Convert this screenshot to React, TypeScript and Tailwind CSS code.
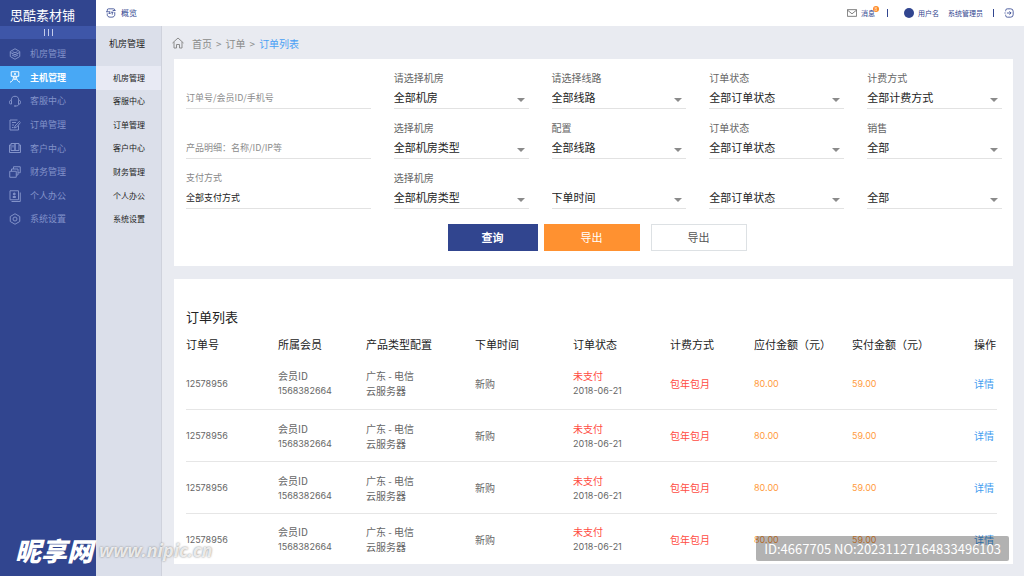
import { useState } from "react";
import type { ReactNode } from "react";

const menu = [
  { name: "机房管理", icon: "cube" },
  { name: "主机管理", icon: "host" },
  { name: "客服中心", icon: "headset" },
  { name: "订单管理", icon: "order" },
  { name: "客户中心", icon: "book" },
  { name: "财务管理", icon: "finance" },
  { name: "个人办公", icon: "person" },
  { name: "系统设置", icon: "setting" },
];

const subMenu = ["机房管理", "客服中心", "订单管理", "客户中心", "财务管理", "个人办公", "系统设置"];

const icons: Record<string, ReactNode> = {
  cube: (
    <>
      <path d="M12 1.5 21.5 7v10L12 22.5 2.5 17V7z" />
      <path d="m3 9 9 4.500L21 9M6 14l6 3 6-3M7 7.500l5 2 5-2" />
    </>
  ),
  host: (
    <>
      <path d="M4.500 1.500h15v9h-15z" />
      <path d="M10 6h4" strokeWidth="3" />
      <path d="M12 10.500v6M9 11c0 6-2 10-7 11.500M15 11c0 6 2 10 7 11.500M9 16.500h6" />
    </>
  ),
  headset: (
    <>
      <path d="M4.500 11a7.500 8.500 0 0 1 15 0M20 18c-1 3-3 4-7 4" />
      <path d="M5 11H3.500A2.500 2.500 0 0 0 1 13.500v2A2.500 2.500 0 0 0 3.500 18H5zM19 11h1.500a2.500 2.500 0 0 1 2.500 2.500v2a2.500 2.500 0 0 1-2.500 2.500H19z" />
      <circle cx="12" cy="22" r="1" />
    </>
  ),
  order: (
    <>
      <path d="M19 13v9H2V2h15" />
      <path d="M6 7h8M6 12h4M6 17h3M21.500 4 12 14l-1 4 4-1.500L23 7" />
    </>
  ),
  book: (
    <>
      <path d="M4 3h8v14H4zM12 3h8v14h-8z" />
      <path d="M4 6H1v15h22V6h-3M8 6v5" />
    </>
  ),
  finance: (
    <>
      <path d="M1.500 10.500h13v12h-13z" />
      <path d="M5 10.500V6h13v12h-3.500M9 6V1.500h13.500v12H18" />
    </>
  ),
  person: (
    <>
      <path d="M2 1.500h17v18H2z" />
      <path d="M22.500 5v18H5" />
      <circle cx="10.500" cy="8" r="2" fill="currentColor" />
      <path d="M8 15h5v-2H8z" fill="currentColor" />
    </>
  ),
  setting: (
    <>
      <path d="M12 1.500 21.500 7v10L12 22.500 2.500 17V7z" />
      <circle cx="12" cy="12" r="4" />
    </>
  ),
  overview: (
    <>
      <path d="M3 8V5a3 3 0 0 1 3-3h12a3 3 0 0 1 3 3M21 10v6c0 4-3 6-7 6h-4c-4 0-7-2-7-6v-3" />
      <path d="M0 9h7M16 6h7M9 7v6M6 13h5M15 10v6M12 10h6" />
    </>
  ),
  mail: <path d="M1 4h22v16H1zM1 5l11 9L23 5" />,
  home: <path d="M1 12 12 2l11 10M4 10v12h5v-7h6v7h5V10" />,
  logout: (
    <>
      <path d="M4 8V6a4 4 0 0 1 4-4h8a6 6 0 0 1 6 6v8a6 6 0 0 1-6 6H8a4 4 0 0 1-4-4v-2" />
      <path d="M1 12h3M7 12h10M13 8l4 4-4 4" />
    </>
  ),
};

function Icon({ name, className }: { name: string; className: string }) {
  return (
    <svg viewBox="0 0 24 24" fill="none" stroke="currentColor" strokeWidth="2" className={className} aria-hidden="true">
      {icons[name]}
    </svg>
  );
}

type Field = { id: string; label?: string; value?: string; placeholder?: string; text?: boolean };

const fields: Field[] = [
  { id: "keyword", placeholder: "订单号/会员ID/手机号", text: true },
  { id: "room", label: "请选择机房", value: "全部机房" },
  { id: "line", label: "请选择线路", value: "全部线路" },
  { id: "status", label: "订单状态", value: "全部订单状态" },
  { id: "billing", label: "计费方式", value: "全部计费方式" },
  { id: "product", placeholder: "产品明细：名称/ID/IP等", text: true },
  { id: "roomType", label: "选择机房", value: "全部机房类型" },
  { id: "config", label: "配置", value: "全部线路" },
  { id: "status2", label: "订单状态", value: "全部订单状态" },
  { id: "sales", label: "销售", value: "全部" },
  { id: "payment", label: "支付方式", value: "全部支付方式", text: true },
  { id: "roomType2", label: "选择机房", value: "全部机房类型" },
  { id: "orderTime", value: "下单时间" },
  { id: "status3", value: "全部订单状态" },
  { id: "all", value: "全部" },
];

function FilterField({ field }: { field: Field }) {
  const { id, label, value, placeholder, text } = field;

  if (text) {
    return (
      <div className="flex flex-col">
        <label htmlFor={id} className="h-[14px] text-[9px] leading-[14px] text-[#888]">{label}</label>
        <input
          id={id}
          type="text"
          aria-label={label || placeholder}
          defaultValue={value}
          placeholder={placeholder}
          className="h-6 w-full border-b border-[#e2e2e2] bg-transparent pt-px text-[9px] text-[#222] outline-none placeholder:text-[#8c8c8c]"
        />
      </div>
    );
  }

  return (
    <div className="flex flex-col">
      <label htmlFor={id} className="h-[14px] text-[10px] leading-[14px] text-[#666]">{label}</label>
      <div className="relative">
        <select
          id={id}
          aria-label={label || value}
          className="block h-6 w-full appearance-none border-b border-[#e2e2e2] bg-transparent pt-px text-[11px] text-[#222] outline-none"
        >
          <option>{value}</option>
        </select>
        <svg viewBox="0 0 8 4" className="pointer-events-none absolute right-1 bottom-[7px] h-1 w-2" aria-hidden="true">
          <path d="M0 0h8L4 4z" fill="#8a8a8a" />
        </svg>
      </div>
    </div>
  );
}

const orders = [1, 2, 3, 4].map((key) => ({
  key,
  no: "12578956",
  member: "1568382664",
  area: "广东 - 电信",
  product: "云服务器",
  type: "新购",
  status: "未支付",
  date: "2018-06-21",
  billing: "包年包月",
  payable: "80.00",
  paid: "59.00",
}));

export default function App() {
  const [active, setActive] = useState("主机管理");
  const [activeSub, setActiveSub] = useState("机房管理");

  return (
    <div className="relative flex min-h-screen bg-[#e9ebf1] font-['Noto_Sans_CJK_SC',sans-serif] text-[#333]">
      {/* Sidebar */}
      <aside className="w-24 shrink-0 bg-[#31458f]">
        <div className="flex h-[26px] items-center pt-1 pl-[10px] text-[13px] leading-5 text-white">思酷素材铺</div>
        <button type="button" aria-label="收起菜单" className="flex h-[13px] w-full items-center justify-center gap-[3px] bg-[#3e56a8]">
          <span className="h-[7px] w-px bg-[#c3cbea]" />
          <span className="h-[7px] w-px bg-[#c3cbea]" />
          <span className="h-[7px] w-px bg-[#c3cbea]" />
        </button>
        <nav className="mt-[3px] grid h-[189px] auto-rows-fr">
          {menu.map((item) => (
            <a
              key={item.name}
              href="#"
              onClick={() => setActive(item.name)}
              className={
                item.name === active
                  ? "flex items-center gap-[9px] bg-[#48a8f5] pl-[9px] text-[9px] font-bold text-white"
                  : "flex items-center gap-[9px] pl-[9px] text-[9px] text-[#8292c9]"
              }
            >
              <Icon name={item.icon} className="h-3 w-3" />
              {item.name}
            </a>
          ))}
        </nav>
      </aside>

      <div className="flex min-w-0 flex-1 flex-col">
        {/* Header */}
        <header className="flex h-[26px] items-center bg-white pr-[10px] pl-[10px] text-[7px] text-[#31458f]">
          <a href="#" className="flex items-center gap-[5px] text-[8px]">
            <Icon name="overview" className="h-[10px] w-[10px]" />
            概览
          </a>
          <div className="ml-auto flex items-center">
            <a href="#" className="relative flex items-center gap-1">
              <Icon name="mail" className="h-[10px] w-[10px] text-[#666]" />
              <span>消息</span>
              <span className="absolute -top-[2px] -right-1 flex h-[6px] w-[6px] items-center justify-center rounded-full bg-[#ff8a24] text-[5px] leading-none text-white">8</span>
            </a>
            <span className="ml-3 h-2 w-px bg-[#31458f]" />
            <span className="ml-4 h-[10px] w-[10px] rounded-full bg-[#31458f]" />
            <span className="ml-1">用户名</span>
            <span className="ml-[9px]">系统管理员</span>
            <span className="ml-[10px] h-2 w-px bg-[#31458f]" />
            <button type="button" aria-label="退出" className="ml-[10px]">
              <Icon name="logout" className="h-[10px] w-[10px]" />
            </button>
          </div>
        </header>

        <div className="flex flex-1">
          {/* Sub menu */}
          <aside className="w-[66px] shrink-0 border-r border-[#cfd2dc] bg-[#dbdfea] text-[#222]">
            <h2 className="mb-1 flex h-9 items-center pl-[13px] text-[9px]">机房管理</h2>
            <nav className="grid h-[165px] auto-rows-fr">
              {subMenu.map((name) => (
                <a
                  key={name}
                  href="#"
                  onClick={() => setActiveSub(name)}
                  className={
                    name === activeSub
                      ? "flex items-center bg-[#e8eaf4] pl-[17px] text-[8px]"
                      : "flex items-center pl-[17px] text-[8px]"
                  }
                >
                  {name}
                </a>
              ))}
            </nav>
          </aside>

          <main className="min-w-0 flex-1 pr-[11px] pb-3 pl-3">
            {/* Breadcrumb */}
            <nav className="flex h-[33px] items-center gap-1 pt-px text-[10px] text-[#8b8b8b]">
              <Icon name="home" className="mr-1 -ml-[2px] h-3 w-3" />
              <a href="#">首页</a>
              <span>&gt;</span>
              <a href="#">订单</a>
              <span>&gt;</span>
              <a href="#" className="text-[#48a0f5]">订单列表</a>
            </nav>

            {/* Filters */}
            <form className="bg-white pt-3 pr-[11px] pb-[15px] pl-3" onSubmit={(e) => e.preventDefault()}>
              <div className="grid grid-cols-[185fr_135fr_135fr_135fr_135fr] gap-x-[23px] gap-y-3">
                {fields.map((field) => (
                  <FilterField key={field.id} field={field} />
                ))}
              </div>
              <div className="mt-[15px] flex justify-center pl-[6px] text-[11px]">
                <button type="submit" className="h-[27px] w-[90px] bg-[#31458f] font-bold text-white">查询</button>
                <button type="button" className="ml-[6px] h-[27px] w-24 bg-[#ff9130] text-white">导出</button>
                <button type="button" className="ml-[11px] h-[27px] w-24 border border-[#dde1e4] text-[#555]">导出</button>
              </div>
            </form>

            {/* Order list */}
            <section className="mt-[13px] bg-white pt-7 pr-4 pl-3">
              <h1 className="text-[13px] leading-5 text-[#222]">订单列表</h1>
              <table className="mt-[5px] w-full table-fixed text-left text-[10px] leading-[15px] text-[#666]">
                <thead>
                  <tr className="h-[25px] text-[11px] whitespace-nowrap text-[#222]">
                    <th className="w-[92px] font-normal">订单号</th>
                    <th className="w-[88px] font-normal">所属会员</th>
                    <th className="w-[109px] font-normal">产品类型配置</th>
                    <th className="w-[98px] font-normal">下单时间</th>
                    <th className="w-[97px] font-normal">订单状态</th>
                    <th className="w-[84px] font-normal">计费方式</th>
                    <th className="w-[98px] font-normal">应付金额（元）</th>
                    <th className="w-[122px] font-normal">实付金额（元）</th>
                    <th className="w-[23px] font-normal">操作</th>
                  </tr>
                </thead>
                <tbody>
                  {orders.map((order) => (
                    <tr key={order.key} className="h-[52px] border-b border-[#e6e6e6] last:h-[51px] last:border-0 [&>td]:pt-px">
                      <td className="font-['Inter',sans-serif] text-[9px]">{order.no}</td>
                      <td>
                        <div>会员ID</div>
                        <div className="font-['Inter',sans-serif] text-[9px]">{order.member}</div>
                      </td>
                      <td>
                        <div>{order.area}</div>
                        <div>{order.product}</div>
                      </td>
                      <td>{order.type}</td>
                      <td>
                        <div className="text-[#ff4b42]">{order.status}</div>
                        <div className="font-['Inter',sans-serif] text-[9px]">{order.date}</div>
                      </td>
                      <td className="text-[#ff4b42]">{order.billing}</td>
                      <td className="font-['Inter',sans-serif] text-[9px] text-[#ff9c40]">{order.payable}</td>
                      <td className="font-['Inter',sans-serif] text-[9px] text-[#ff9c40]">{order.paid}</td>
                      <td>
                        <a href="#" className="text-[#3f9cf0]">详情</a>
                      </td>
                    </tr>
                  ))}
                </tbody>
              </table>
            </section>
          </main>
        </div>
      </div>

      {/* Watermarks */}
      <div className="pointer-events-none absolute bottom-3 left-[15px] flex items-center gap-[6px] italic">
        <span className="text-[26px] leading-7 font-black text-white">昵享网</span>
        <span className="font-['Open_Sans',sans-serif] text-[18px] leading-5 font-bold text-white/80 [text-shadow:0_0_2px_#777]">www.nipic.cn</span>
      </div>
      <div className="pointer-events-none absolute right-[15px] bottom-[15px] flex h-[25px] items-center rounded-xs bg-black/30 px-2 text-[13px] text-white">
        ID:4667705 NO:20231127164833496103
      </div>
    </div>
  );
}
